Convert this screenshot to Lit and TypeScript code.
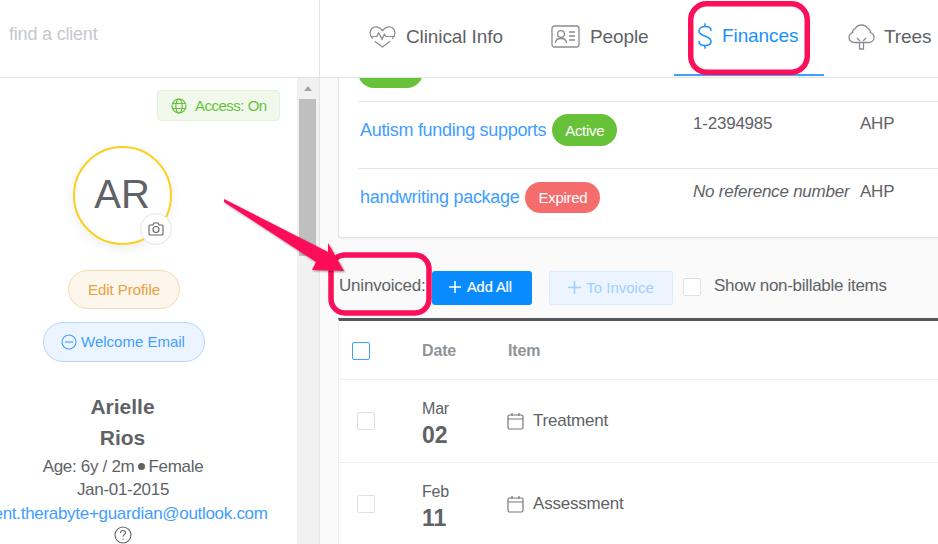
import { LitElement, html, css, svg } from "lit";
import { customElement } from "lit/decorators.js";

const cal = html`<svg class="cal" width="17" height="18" viewBox="0 0 17 18" fill="none" stroke="#77787d" stroke-width="1.2"><rect x="1" y="3" width="15" height="14" rx="1.5"/><path d="M1 7h15M5 1v3M12 1v3"/></svg>`;

@customElement("app-root")
export class AppRoot extends LitElement {
  static styles = css`
    :host { display: block; width: 938px; height: 544px; overflow: hidden; position: relative; background: #fff;
      font-family: "Liberation Sans", Arial, sans-serif; color: #606266; }
    * { box-sizing: border-box; }
    .app { display: grid; grid-template-columns: 320px 618px; grid-template-rows: 78px 466px; width: 938px; height: 544px; }
    .search { border-right: 1px solid #e4e4e6; border-bottom: 1px solid #e4e4e6; padding: 24px 0 0 9px; font-size: 18px; line-height: 20px; color: #c4c8d0; letter-spacing: -0.2px; }
    .tabs { border-bottom: 1px solid #e4e4e6; display: flex; overflow: hidden; padding-left: 31px; }
    .tab { display: flex; align-items: center; gap: 10px; height: 77px; padding: 0 0 4px 18px; font-size: 19px; letter-spacing: -0.1px; color: #606266; flex: none; white-space: nowrap; }
    .tab.clin { width: 180px; }
    .tab.peo { width: 143px; padding-left: 20px; gap: 10px; }
    .tab.fin { width: 150px; padding: 0 0 2px 23px; gap: 9px; color: #1890ff; border-bottom: 2px solid #409eff; height: 76px; }
    .tab.tre { padding-left: 24px; gap: 9px; }
    .side { display: flex; border-right: 1px solid #e4e4e6; overflow: hidden; }
    .profile { width: 297px; flex: none; display: flex; flex-direction: column; align-items: center; padding-top: 12px; height: 466px; }
    .bar { flex: 1; background: #f1f1f1; display: flex; flex-direction: column; align-items: stretch; }
    .bar .up { height: 21px; display: flex; justify-content: center; padding-top: 8px; }
    .bar .up i { width: 0; height: 0; border: 4.5px solid transparent; border-top: 0; border-bottom: 5px solid #a3a3a3; }
    .bar .thumb { height: 157px; width: 17px; margin-left: 2px; background: #bfbfbf; }
    .access { align-self: flex-end; margin-right: 17px; width: 123px; height: 31px; background: #f0f9eb; border: 1px solid #e1f3d8; border-radius: 4px; color: #67c23a; font-size: 15px; display: flex; align-items: center; gap: 8px; padding-left: 13px; letter-spacing: -0.5px; }
    .avatar { margin-top: 25px; width: 99px; height: 99px; border-radius: 50%; border: 2px solid #fccf1c; box-shadow: 0 4px 12px rgba(0,0,0,.07); position: relative; display: flex; align-items: center; justify-content: center; font-size: 40px; color: #606266; margin-right: 53px; flex: none; padding-bottom: 3px; }
    .cam { position: absolute; right: -2px; bottom: -2px; width: 32px; height: 32px; border-radius: 50%; background: #fff; border: 1px solid #e4e4ea; display: flex; align-items: center; justify-content: center; }
    .btn-e { margin-top: 25px; margin-right: 49px; width: 112px; height: 39px; border-radius: 20px; background: #fdf6ec; border: 1px solid #f5dab1; color: #e6a23c; font-size: 15px; letter-spacing: -0.05px; display: flex; align-items: center; justify-content: center; flex: none; }
    .btn-w { margin-top: 13px; margin-right: 49px; width: 162px; height: 40px; padding: 0 2px 1px 0; border-radius: 20px; background: #ecf5ff; border: 1px solid #b3d8ff; color: #409eff; font-size: 15px; display: flex; align-items: center; justify-content: center; gap: 4px; flex: none; }
    .name { margin-top: 29px; margin-right: 52px; font-size: 21px; font-weight: 700; line-height: 31px; text-align: center; color: #606266; }
    .line { margin-right: 51px; font-size: 17px; line-height: 23px; white-space: nowrap; letter-spacing: -0.3px; display: flex; align-items: center; }
    .line.age { margin-top: 2px; }
    .dot { display: inline-block; width: 7px; height: 7px; border-radius: 50%; background: #606266; margin: 0 3px 0 4px; }
    .mail { color: #409eff; font-size: 17px; line-height: 25px; letter-spacing: -0.3px; white-space: nowrap; align-self: center; margin-right: 51px; flex: none; }
    .q { margin-right: 51px; flex: none; }
    .main { background: #fafafa; overflow: hidden; padding-left: 18px; }
    .card { background: #fff; border: 1px solid #e4e4e6; border-top: 0; border-right: 0; height: 160px; border-radius: 0 0 0 3px; box-shadow: 0 1px 1px rgba(0,0,0,.05); padding-left: 19px; }
    .row { display: grid; grid-template-columns: 335px 167px 1fr; border-bottom: 1px solid #e4e4e6; font-size: 17px; }
    .row.a { height: 24px; }
    .row.b { height: 67px; padding-top: 12px; }
    .row.c { height: 68px; padding-top: 13px; border-bottom: 0; }
    .link { color: #409eff; font-size: 18px; letter-spacing: -0.3px; display: flex; align-items: flex-start; gap: 6px; white-space: nowrap; margin-left: 2px; }
    .link span.t { margin-top: 5px; line-height: 22px; }
    .row.c .link span.t { margin-top: 4px; }
    .tag { height: 32px; border-radius: 16px; color: #fff; font-size: 15px; display: flex; align-items: center; justify-content: center; letter-spacing: -0.3px; }
    .tag.g { background: #67c23a; width: 65px; }
    .tag.r { background: #f56c6c; width: 75px; height: 31px; }
    .stub { display: block; width: 65px; height: 32px; background: #67c23a; border-radius: 16px; margin-top: -22px; }
    .ref { line-height: 20px; letter-spacing: -0.22px; white-space: nowrap; }
    em.ref { font-style: italic; }
    .tools { height: 80px; display: flex; align-items: flex-start; padding-top: 33px; font-size: 17px; }
    .lbl { width: 94px; flex: none; line-height: 30px; letter-spacing: -0.2px; white-space: nowrap; padding-left: 1px; }
    .add { width: 100px; height: 34px; padding: 0 3px 2px 0; background: #0a8bfd; color: #fff; border-radius: 3px; display: flex; align-items: center; justify-content: center; gap: 6px; font-size: 14.500px; -webkit-text-stroke: .2px #fff; flex: none; }
    .inv { width: 124px; height: 34px; padding-bottom: 1px; margin-left: 17px; background: #ecf5ff; border: 1px solid #d9ecff; color: #a0cfff; border-radius: 3px; display: flex; align-items: center; justify-content: center; gap: 5px; font-size: 15px; flex: none; }
    .chk { width: 18px; height: 18px; background: #fff; border: 1px solid #dcdfe6; border-radius: 2px; flex: none; display: block; }
    .tools .chk { margin: 7px 13px 0 10px; }
    .show { line-height: 30px; letter-spacing: -0.3px; white-space: nowrap; }
    .table { background: #fff; border-top: 3px solid #55565a; border-left: 1px solid #ebeef5; height: 240px; }
    .tr { display: grid; grid-template-columns: 65px 86px 1fr; align-items: center; border-bottom: 1px solid #ebeef5; height: 83px; padding-left: 18px; }
    .tr .chk:not(.blue) { margin-top: -1px; }
    .tr.h { height: 59px; padding-left: 13px; grid-template-columns: 70px 86px 1fr; padding-top: 1px; color: #909399; font-weight: 700; font-size: 16px; letter-spacing: -0.15px; }
    .chk.blue { border-color: #409eff; }
    .mon { font-size: 16px; line-height: 20px; letter-spacing: -0.2px; }
    .day { font-size: 23px; font-weight: 700; line-height: 27px; margin-top: 3px; }
    .date { padding-top: 5px; }
    .item { display: flex; align-items: center; gap: 9px; font-size: 17px; letter-spacing: -0.2px; margin-left: -1px; }
    .over { position: absolute; left: 0; top: 0; pointer-events: none; }
  `;

  render() {
    return html`
      <div class="app">
        <div class="search">find a client</div>
        <div class="tabs">
          <div class="tab clin">
            <svg width="27" height="23" viewBox="0 0 28 24" fill="none" stroke="#8a8c91" stroke-width="1.3" stroke-linejoin="round"><path d="M4 14.5C1.8 12.5 1 10.5 1 8.2 1 4.5 3.8 2 7 2c2.800 0 5 1.500 7 4 2-2.500 4.200-4 7-4 3.200 0 6 2.500 6 6.200 0 2.300-.8 4.300-3 6.300"/><path d="M1.500 12H8l2-4 3.500 7L16 9.500l1.500 2.500h9"/><path d="M6 17l8 6 8-6"/></svg>
            <span>Clinical Info</span>
          </div>
          <div class="tab peo">
            <svg width="29" height="23" viewBox="0 0 29 23" fill="none" stroke="#8a8c91" stroke-width="1.3"><rect x="1" y="1" width="27" height="21" rx="2.500"/><circle cx="10" cy="9" r="3.400"/><path d="M4.500 18c0-3 2-4.500 5.500-4.500s5.500 1.500 5.500 4.500"/><path d="M18 7h6M18 11h6M18 15h6"/></svg>
            <span>People</span>
          </div>
          <div class="tab fin">
            <svg width="16" height="26" viewBox="0 0 16 26" fill="none" stroke="#1890ff" stroke-width="1.500" stroke-linecap="round"><path d="M14 7.500C14 5 11.500 3.500 8 3.500S2 5.500 2 8c0 6 12 4 12 10.500 0 2.500-2.500 4-6 4s-6-1.500-6-4M8 .8v2.700M8 22.500v2.700"/></svg>
            <span>Finances</span>
          </div>
          <div class="tab tre">
            <svg width="27" height="26" viewBox="0 0 27 26" fill="none" stroke="#8a8c91" stroke-width="1.300" stroke-linejoin="round"><path d="M6.500 18.500C3.200 18.500 1 16.300 1 13.500c0-2.400 1.500-4.200 3.700-4.800C4.500 6.500 5.500 4.800 7.500 4.300 8.500 2.200 10.800 1 13.500 1s5 1.200 6 3.300c2 .5 3 2.200 2.800 4.400 2.200.6 3.700 2.400 3.700 4.800 0 2.800-2.200 5-5.500 5z"/><path d="M11.500 18.500V25h4v-6.500M9 14l3 3M18 14l-3 3"/></svg>
            <span>Trees</span>
          </div>
        </div>
        <div class="side">
          <div class="profile">
            <div class="access">
              <svg width="16" height="16" viewBox="0 0 16 16" fill="none" stroke="#67c23a" stroke-width="1.200"><circle cx="8" cy="8" r="7"/><ellipse cx="8" cy="8" rx="3.200" ry="7"/><path d="M1.500 5.500h13M1.500 10.500h13"/></svg>
              <span>Access: On</span>
            </div>
            <div class="avatar">AR
              <div class="cam">
                <svg width="16" height="14" viewBox="0 0 16 14" fill="none" stroke="#606266" stroke-width="1.100"><path d="M1 4a1 1 0 0 1 1-1h3l1-2h4l1 2h3a1 1 0 0 1 1 1v8a1 1 0 0 1-1 1H2a1 1 0 0 1-1-1z"/><circle cx="8" cy="7.500" r="3"/></svg>
              </div>
            </div>
            <div class="btn-e">Edit Profile</div>
            <div class="btn-w">
              <svg width="16" height="16" viewBox="0 0 16 16" fill="none" stroke="#409eff" stroke-width="1.100"><circle cx="8" cy="8" r="7"/><path d="M4 8h8"/></svg>
              <span>Welcome Email</span>
            </div>
            <div class="name">Arielle<br />Rios</div>
            <div class="line age">Age: 6y / 2m<i class="dot"></i>Female</div>
            <div class="line">Jan-01-2015</div>
            <div class="mail">client.therabyte+guardian@outlook.com</div>
            <svg class="q" width="18" height="18" viewBox="0 0 18 18" fill="none" stroke="#606266" stroke-width="1.100"><circle cx="9" cy="9" r="8"/><path d="M6.500 7c0-1.500 1-2.500 2.500-2.500s2.500 1 2.500 2.300c0 1.900-2.500 1.900-2.500 4"/><path d="M9 12.800v1.200"/></svg>
          </div>
          <div class="bar">
            <div class="up"><i></i></div>
            <div class="thumb"></div>
          </div>
        </div>
        <div class="main">
          <div class="card">
            <div class="row a"><span class="stub"></span><span></span><span></span></div>
            <div class="row b">
              <div class="link"><span class="t">Autism funding supports</span><span class="tag g">Active</span></div>
              <span class="ref">1-2394985</span><span class="ref">AHP</span>
            </div>
            <div class="row c">
              <div class="link"><span class="t">handwriting package</span><span class="tag r">Expired</span></div>
              <em class="ref">No reference number</em><span class="ref">AHP</span>
            </div>
          </div>
          <div class="tools">
            <span class="lbl">Uninvoiced:</span>
            <div class="add"><svg width="12" height="12" viewBox="0 0 12 12" stroke="#fff" stroke-width="1.500"><path d="M6 0v12M0 6h12"/></svg><span>Add All</span></div>
            <div class="inv"><svg width="13" height="13" viewBox="0 0 13 13" stroke="#a0cfff" stroke-width="1.500"><path d="M6.500 0v13M0 6.500h13"/></svg><span>To Invoice</span></div>
            <span class="chk"></span>
            <span class="show">Show non-billable items</span>
          </div>
          <div class="table">
            <div class="tr h"><span class="chk blue"></span><span>Date</span><span>Item</span></div>
            <div class="tr"><span class="chk"></span><div class="date"><div class="mon">Mar</div><div class="day">02</div></div><div class="item">${cal}<span>Treatment</span></div></div>
            <div class="tr"><span class="chk"></span><div class="date"><div class="mon">Feb</div><div class="day">11</div></div><div class="item">${cal}<span>Assessment</span></div></div>
          </div>
        </div>
      </div>
      <svg class="over" width="938" height="544" viewBox="0 0 938 544" fill="none">
        ${svg`<defs><filter id="s" x="-10%" y="-10%" width="120%" height="120%"><feDropShadow dx="1" dy="1" stdDeviation="1" flood-color="#000" flood-opacity=".45"/></filter></defs>`}
        <rect x="690.750" y="3.750" width="116.500" height="68.500" rx="16" stroke="#fb0f5a" stroke-width="5.500"/>
        <rect x="331" y="255" width="98" height="58" rx="14" stroke="#fb0f5a" stroke-width="5.500"/>
        <path d="M224 199 L328 252 L328 243 L344 271 L312 270 L316 262 L224 202 Z" fill="#fb0f5a" filter="url(#s)"/>
      </svg>
    `;
  }
}
